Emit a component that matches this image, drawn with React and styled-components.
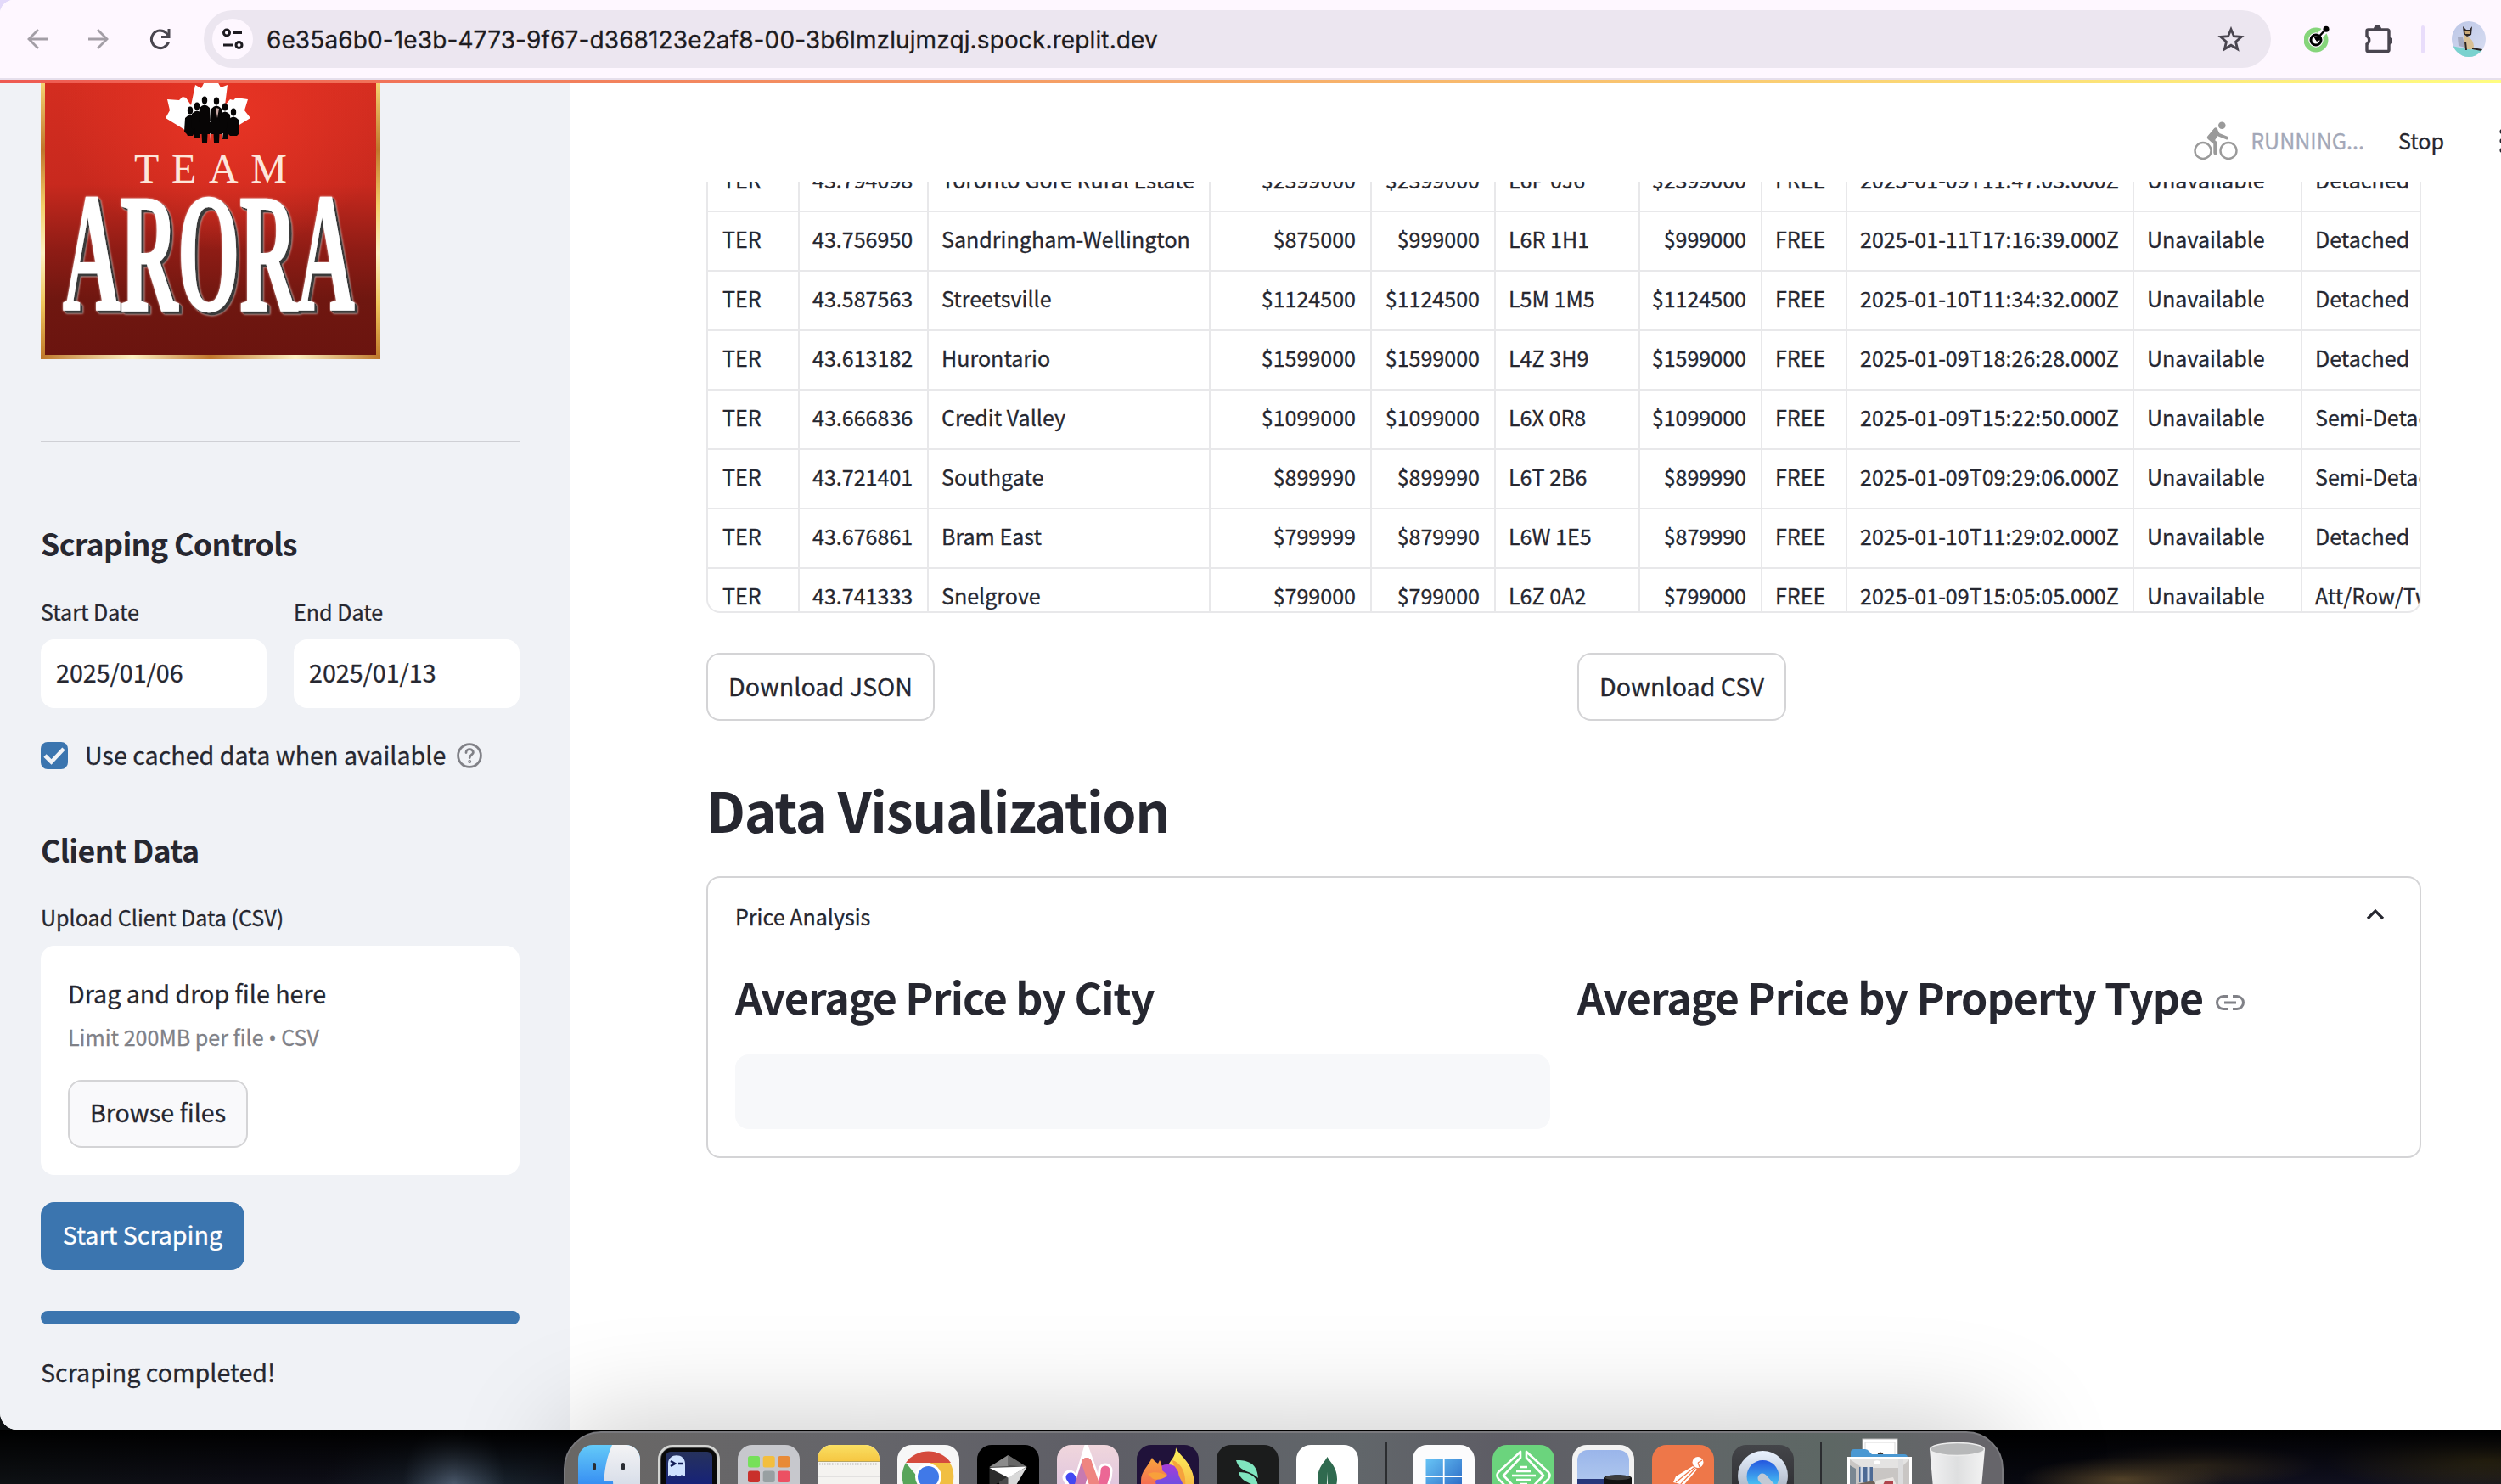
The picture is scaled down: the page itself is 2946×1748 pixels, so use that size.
import React from "react";
import styled, { createGlobalStyle } from "styled-components";

const GlobalStyle = createGlobalStyle`
  * { box-sizing: border-box; }
  html, body { margin: 0; padding: 0; overflow: hidden; background: #000; }
  body {
    font-family: "Noto Sans CJK SC", "Noto Sans", sans-serif;
    color: #262730;
    -webkit-text-stroke: 0.3px currentColor;
  }
`;

const size = { sm: "25.07px", md: "28.65px", lg: "35.8px", xl: "50.1px", xxl: "64.5px" };

const Desktop = styled.div`
  position: relative;
  width: 2946px;
  height: 1748px;
  overflow: hidden;
  background:
    linear-gradient(180deg, #000 0, rgba(0, 0, 0, 0) 64px) 0 1684px / 100% 64px no-repeat,
    radial-gradient(ellipse 60px 80px at 535px 1748px, #4a586b 0, rgba(40, 52, 68, 0) 100%),
    radial-gradient(ellipse 180px 90px at 560px 1748px, #1c2732 0, rgba(20, 26, 34, 0) 100%),
    radial-gradient(ellipse 120px 26px at 2500px 1742px, #5a482c 0, rgba(60, 48, 30, 0) 100%),
    radial-gradient(ellipse 140px 26px at 2590px 1726px, #3d3223 0, rgba(46, 38, 27, 0) 100%),
    radial-gradient(ellipse 190px 40px at 2930px 1720px, #3a3117 0, rgba(42, 35, 16, 0) 100%),
    linear-gradient(90deg, #0e1114 0, #0e0e17 300px, #0e0f18 640px, #090a12 2400px, #10101f 2700px, #10101e 2946px);
`;

const Backdrop = styled.div`
  background: linear-gradient(180deg, #e3d9fa 40px, transparent 40px);
`;

const Window = styled.div`
  width: 2946px;
  height: 1684px;
  display: flex;
  flex-direction: column;
  overflow: hidden;
  border-radius: 16px 0 0 20px;
  background: #fff;
`;

const Toolbar = styled.header`
  height: 94px;
  flex: none;
  display: flex;
  align-items: center;
  padding: 0 18px 0 32px;
  background: #fef7ff;
  border-bottom: 2px solid #e6dfec;
`;

const NavIcons = styled.div`
  display: flex;
  gap: 48px;
  width: 208px;
  svg { display: block; }
`;

const AddressBar = styled.div`
  width: 2436px;
  height: 68px;
  border-radius: 34px;
  background: #ece6f0;
  display: flex;
  align-items: center;
  padding: 0 31px 0 10px;
`;

const SiteInfo = styled.div`
  width: 48px;
  height: 48px;
  border-radius: 50%;
  background: #fef7ff;
  display: flex;
  align-items: center;
  justify-content: center;
`;

const Url = styled.span`
  flex: 1;
  margin-left: 16px;
  padding-top: 1px;
  font-family: Inter, Roboto, sans-serif;
  font-size: 28px;
  line-height: 40px;
  letter-spacing: 0.12px;
  color: #1d1b20;
`;

const Extensions = styled.div`
  display: flex;
  align-items: center;
  gap: 42px;
  margin-left: 39px;
  svg { display: block; }
`;

const Separator = styled.div`
  width: 4px;
  height: 33px;
  border-radius: 2px;
  background: #e9ddfb;
  margin: 0 -10px 0 -8px;
`;

const Page = styled.div`
  position: relative;
  flex: 1;
  min-height: 0;
  display: flex;
`;

const Decoration = styled.div`
  position: absolute;
  top: 0;
  left: 0;
  right: 0;
  height: 4px;
  background: linear-gradient(90deg, #ee5a52, #fffd80);
`;

const Sidebar = styled.aside`
  width: 672px;
  flex: none;
  padding: 0 60px 0 48px;
  background: #f0f2f6;
  display: flex;
  flex-direction: column;
  align-items: stretch;
`;

const LogoSvg = styled.svg`
  display: block;
  width: 400px;
  height: 329px;
`;

const Divider = styled.hr`
  margin: 96px 0 0;
  border: 0;
  height: 2px;
  background: #cfd0d5;
`;

const SideHeading = styled.h2`
  margin: ${(p) => p.$top}px 0 0;
  font-size: ${size.lg};
  line-height: 48px;
  font-weight: 600;
  letter-spacing: -0.0195em;
  -webkit-text-stroke: 0;
  white-space: nowrap;
`;

const DateRow = styled.div`
  display: grid;
  grid-template-columns: 1fr 1fr;
  gap: 32px;
  margin-top: 37px;
`;

const Label = styled.div`
  font-size: ${size.sm};
  line-height: 40px;
  margin-top: ${(p) => p.$top || 0}px;
`;

const DateInput = styled.div`
  margin-top: 13px;
  height: 81px;
  border-radius: 16px;
  background: #fff;
  padding: 0 18px 5px;
  font-size: ${size.md};
  display: flex;
  align-items: center;
`;

const CheckRow = styled.div`
  display: flex;
  align-items: center;
  height: 32px;
  margin-top: 40px;
  font-size: ${size.md};
  span { padding-bottom: 3px; margin: 0 13px 0 20px; white-space: nowrap; }
`;

const CheckBox = styled.div`
  width: 32px;
  height: 32px;
  border-radius: 8px;
  background: #3b75af;
  display: flex;
  align-items: center;
  justify-content: center;
`;

const Uploader = styled.div`
  margin-top: 14px;
  height: 270px;
  border-radius: 16px;
  background: #fff;
  padding: 32px 32px 0;
`;

const UploadTitle = styled.div`
  font-size: ${size.md};
  line-height: 48px;
`;

const UploadHint = styled.div`
  margin-top: 7px;
  font-size: ${size.sm};
  line-height: 40px;
  height: 40px;
  color: #808187;
`;

const Bullet = styled.span`
  font-family: "Noto Sans", sans-serif;
`;

const Button = styled.button`
  display: flex;
  align-items: center;
  justify-content: center;
  height: 80px;
  width: ${(p) => p.$width}px;
  margin: ${(p) => p.$top || 0}px 0 0;
  padding: 0 0 ${(p) => (p.$top ? 6 : 4)}px;
  border-radius: 16px;
  border: 2px solid ${(p) => (p.$primary ? "#3b75af" : "#d4d4d6")};
  background: ${(p) => (p.$primary ? "#3b75af" : p.$tint || "#fff")};
  color: ${(p) => (p.$primary ? "#fff" : "#262730")};
  font-family: inherit;
  font-size: ${size.md};
  -webkit-text-stroke: inherit;
  white-space: nowrap;
`;

const Progress = styled.div`
  margin-top: 48px;
  height: 16px;
  border-radius: 8px;
  background: #3b75af;
`;

const Status = styled.div`
  margin-top: 32px;
  font-size: ${size.md};
  line-height: 48px;
`;

const Main = styled.main`
  flex: 1;
  min-width: 0;
  background: #fff;
  display: flex;
  flex-direction: column;
`;

const StatusBar = styled.div`
  height: 120px;
  flex: none;
  display: flex;
  align-items: center;
  justify-content: flex-end;
  padding-top: 23px;
  font-size: ${size.sm};
  overflow: hidden;
  svg { display: block; flex: none; }
`;

const Running = styled.span`
  margin: 0 40px 2px 15px;
  color: #a3a8b8;
`;

const Stop = styled.span`
  margin: 0 67px 2px 0;
  width: 52px;
`;

const Body = styled.div`
  width: 2020px;
  margin-left: 160px;
`;

const Table = styled.div`
  height: 508px;
  overflow: hidden;
  border: 2px solid #e8e8ea;
  border-top: 0;
  border-radius: 0 0 16px 16px;
`;

const Rows = styled.div`
  margin-top: -34px;
`;

const Row = styled.div`
  display: grid;
  grid-template-columns: 108px 152px 332px 190px 146px 170px 144px 100px 338px 198px 240px;
  height: 70px;
  border-bottom: 2px solid #e8e8ea;
`;

const Cell = styled.div`
  display: flex;
  align-items: center;
  justify-content: ${(p) => (p.$right ? "flex-end" : "flex-start")};
  padding: 0 17px 6px ${(p) => (p.$first ? 17 : 15)}px;
  border-right: 2px solid #e8e8ea;
  font-size: ${size.sm};
  white-space: nowrap;
`;

const Columns = styled.div`
  display: grid;
  grid-template-columns: 1fr 1fr;
  align-items: start;
  gap: 32px;
  margin-top: ${(p) => p.$top}px;
`;

const Title = styled.h1`
  margin: 64px 0 0;
  font-size: ${size.xxl};
  line-height: 80px;
  font-weight: 600;
  letter-spacing: -0.0205em;
  -webkit-text-stroke: 0;
`;

const Expander = styled.section`
  margin-top: 39px;
  height: 332px;
  border: 2px solid #d4d4d6;
  border-radius: 16px;
  padding: 25px 32px 0;
`;

const Summary = styled.div`
  display: flex;
  justify-content: space-between;
  align-items: center;
  height: 40px;
  font-size: ${size.sm};
  line-height: 40px;
  padding-right: 8px;
`;

const ChartTitle = styled.h3`
  display: flex;
  align-items: center;
  margin: 0;
  font-size: ${size.xl};
  line-height: 60px;
  font-weight: 600;
  letter-spacing: -0.0195em;
  -webkit-text-stroke: 0;
  white-space: nowrap;
  svg { margin: 15px 0 0 15px; }
`;

const Skeleton = styled.div`
  margin-top: 39px;
  height: 88px;
  border-radius: 16px;
  background: #f7f8fa;
`;

const Dock = styled.nav`
  position: absolute;
  left: 664px;
  top: 1686px;
  width: 1696px;
  height: 110px;
  border-radius: 44px 44px 0 0;
  border: 2px solid #79797d;
  background: linear-gradient(90deg, #696765, #65656a 20%, #5e5e66 38%, #61666a 55%, #5e5d65 65%, #616668 78%, #5d6764 88%, #66656a 97%);
  box-shadow: 0 0 130px rgba(0, 0, 0, 0.25);
  display: flex;
  align-items: flex-start;
  padding: 14px 0 0 15px;
  gap: 21.05px;
`;

const Tile = styled.svg`
  display: block;
  flex: none;
  width: 73px;
  height: 73px;
  border-radius: 17px;
`;

const Loose = styled.svg`
  display: block;
  flex: none;
  overflow: visible;
  width: ${(p) => p.$w}px;
  height: 73px;
`;

const DockLine = styled.div`
  width: 2px;
  height: 60px;
  flex: none;
  margin: -3px 8.5px 0 10.5px;
  background: #2b2d30;
`;

const Arrow = ({ flip }) => (
  <svg width="24" height="24" viewBox="0 0 24 24" fill="none" stroke="#a39ea6" strokeWidth="2.8" transform={flip ? "scale(-1 1)" : undefined}>
    <path d="M24 12H2M13 1L2 12l11 11" />
  </svg>
);

const Reload = () => (
  <svg width="25" height="25" viewBox="0 0 25 25" fill="none" stroke="#49454f" strokeWidth="3">
    <path d="M22.5 15.5A10.3 10.3 0 1 1 20 5l2 2.5" />
    <path d="M23 0v9.5h-9" />
  </svg>
);

const Tune = () => (
  <svg width="26" height="26" viewBox="0 0 26 26" fill="none" stroke="#1d1b20" strokeWidth="3">
    <circle cx="6" cy="5.5" r="3.5" />
    <path d="M13 5.5h11M2 20h11" />
    <circle cx="20.5" cy="20" r="3.5" />
  </svg>
);

const Star = () => (
  <svg width="32" height="31" viewBox="0 0 32 31" fill="none" stroke="#49454f" strokeWidth="2.8">
    <path d="M16 3.5l3.4 8.2 8.8.7-6.7 5.8 2.1 8.6-7.6-4.6-7.6 4.6 2.1-8.6-6.7-5.8 8.8-.7z" />
  </svg>
);

const GreenTool = () => (
  <svg width="30" height="32" viewBox="0 0 30 32">
    <circle cx="14" cy="17" r="11.5" fill="none" stroke="#86d57b" strokeWidth="6" />
    <path d="M14 17L26 4" stroke="#fef7ff" strokeWidth="8" />
    <circle cx="14" cy="17" r="8.6" fill="#fef7ff" />
    <circle cx="14" cy="17" r="6" fill="#fff" stroke="#000" strokeWidth="3" />
    <path d="M14 17L26 4" stroke="#000" strokeWidth="2.4" />
    <circle cx="26" cy="4.2" r="3.5" />
    <path d="M11 13l7-1 1 5-4 2z" />
  </svg>
);

const Puzzle = () => (
  <svg width="32" height="33" viewBox="0 0 32 33">
    <path d="M3.5 5h23a1.5 1.5 0 0 1 1.5 1.5V29a1.5 1.5 0 0 1-1.5 1.500h-23A1.500 1.500 0 0 1 2 29v-7a5.500 5.500 0 0 0 0-9.500v-6A1.500 1.500 0 0 1 3.500 5z" fill="none" stroke="#49454f" strokeWidth="3.400" />
    <path d="M10 4a4.500 4.500 0 0 1 9 0zM28.500 13.500a4 4 0 0 1 0 9z" fill="#49454f" />
  </svg>
);

const Avatar = () => (
  <svg width="40" height="42" viewBox="0 0 40 42">
    <defs>
      <clipPath id="avatar"><ellipse cx="20" cy="21" rx="20" ry="21" /></clipPath>
      <linearGradient id="avatarSky" x1="0" y1="0" x2="1" y2="1"><stop stopColor="#bcc6e6" /><stop offset="1" stopColor="#d9def2" /></linearGradient>
    </defs>
    <g clipPath="url(#avatar)">
      <rect width="40" height="42" fill="url(#avatarSky)" />
      <path d="M0 29l18 4 22 1v8H0z" fill="#7ad2cf" />
      <path d="M7 19l6 0 3 12-8-2z" fill="#a4a9c0" />
      <path d="M15 14c4 6 12 6 11 19H16c-1-6-3-12-1-19z" fill="#d8bf95" />
      <path d="M13 6l4 4h4l3-4-1 10-5 2-4-3zM24 31l12 2-1 2-11-2zM15 24l2 0 1 10h-2z" fill="#2a2323" />
      <path d="M15 11h7l-1 4h-5z" fill="#c9a877" />
    </g>
  </svg>
);

const people = [
  [176, 36, 66], [184, 31, 69], [193, 24, 74], [207, 25, 74], [217, 32, 70], [227, 38, 66],
];

const Logo = () => (
  <LogoSvg viewBox="0 0 400 329">
    <defs>
      <linearGradient id="red" x1="0" y1="0" x2="0" y2="1">
        <stop offset="0" stopColor="#d42d20" /><stop offset="0.38" stopColor="#c8291e" />
        <stop offset="0.62" stopColor="#8e1c15" /><stop offset="0.8" stopColor="#6f1710" /><stop offset="1" stopColor="#6b140f" />
      </linearGradient>
      <radialGradient id="glow" cx="0.55" cy="0.12" r="0.5">
        <stop offset="0" stopColor="#e83424" /><stop offset="1" stopColor="#e83424" stopOpacity="0" />
      </radialGradient>
      <linearGradient id="goldV" x1="0" y1="0" x2="0" y2="1">
        <stop offset="0" stopColor="#f7d774" /><stop offset="0.25" stopColor="#c0762c" /><stop offset="0.45" stopColor="#f3cf69" />
        <stop offset="0.62" stopColor="#fdf2c4" /><stop offset="0.8" stopColor="#f0c75c" /><stop offset="1" stopColor="#bf772a" />
      </linearGradient>
      <linearGradient id="goldH">
        <stop offset="0" stopColor="#bf772a" /><stop offset="0.27" stopColor="#fdf2c4" /><stop offset="0.5" stopColor="#c0762c" />
        <stop offset="0.75" stopColor="#fdf2c4" /><stop offset="1" stopColor="#bf772a" />
      </linearGradient>
      <filter id="extrude" x="-5%" y="-5%" width="112%" height="112%">
        <feDropShadow dx="1.5" dy="1.5" stdDeviation="0" floodColor="#3b3b3b" />
        <feDropShadow dx="2" dy="2" stdDeviation="0" floodColor="#3b3b3b" />
        <feDropShadow dx="0" dy="0" stdDeviation="0.8" floodColor="#e6c4c0" />
      </filter>
    </defs>
    <rect width="400" height="329" fill="url(#goldV)" />
    <rect y="324" width="400" height="5" fill="url(#goldH)" />
    <rect x="5" width="390" height="324" fill="url(#red)" />
    <rect x="5" width="390" height="324" fill="url(#glow)" />
    <path fill="#fff" d="M182 6l7 4 5-10h13l5 9 8-3-3 24 6-7 4 1 3-3 14 2-4 13 7 9-18 11-12 8h-40l-12-8-18-11 5-9-3-13 14 1 4-4 4 1 6 9z" />
    <g fill="#070505">
      {people.map(([x, y, bottom]) => (
        <g key={x}>
          <ellipse cx={x} cy={y} rx="3.2" ry="4.6" />
          <path d={`M${x - 6} ${y + 9}q6-7 12 0l1 16-3 3-1 ${bottom - y - 28}h-6l-1-${bottom - y - 28}-3-3z`} />
        </g>
      ))}
      <path d="M180 50h40l-2 14h-36z" />
    </g>
    <path d="M206 33l2 12 2-11zM199 63l1 9 1-9zM213 63l1 7 1-7z" fill="#c9a9a5" />
    <text x="110" y="121" fontFamily="Liberation Serif, serif" fontSize="48" textLength="180" lengthAdjust="spacing" fill="#fde6da">TEAM</text>
    <g filter="url(#extrude)">
      <text transform="translate(26 271) scale(0.471 1)" fontFamily="Liberation Serif, serif" fontWeight="700" fontSize="199" fill="#fff" stroke="#fff" strokeWidth="2.5">ARORA</text>
    </g>
  </LogoSvg>
);

const Help = () => (
  <svg width="30" height="30" viewBox="0 0 30 30" fill="none" stroke="#808187" strokeWidth="2.8" strokeLinecap="round">
    <circle cx="15" cy="15" r="13.4" />
    <path d="M11 11.5c0-5 8.4-5 8.4-.3 0 3-4.2 3.100-4.200 6.300" />
    <circle cx="15.200" cy="22" r=".6" />
  </svg>
);

const Cyclist = () => (
  <svg width="52" height="46" viewBox="0 0 52 46" fill="none" stroke="#9a9a9a">
    <circle cx="11" cy="34.5" r="9.5" strokeWidth="2.4" />
    <circle cx="41" cy="34.5" r="9.5" strokeWidth="2.4" />
    <circle cx="33.3" cy="4.8" r="4.3" fill="#9a9a9a" stroke="none" />
    <path d="M26 9.5l-8 9.5 7.500 6.500V37" strokeWidth="4.400" strokeLinecap="round" strokeLinejoin="round" />
    <path d="M26 10l3 5.500 10 4" strokeWidth="4" strokeLinecap="round" strokeLinejoin="round" />
    <path d="M17 19l8-10 4 5-5 8z" fill="#9a9a9a" strokeWidth="2" strokeLinejoin="round" />
  </svg>
);

const Kebab = () => (
  <svg width="2" height="28" viewBox="0 0 2 28" fill="#262730">
    <circle cx="3.4" cy="3" r="3" /><circle cx="3.4" cy="14" r="3" /><circle cx="3.4" cy="25" r="3" />
  </svg>
);

const rows = [
  ["TER", "43.794098", "Toronto Gore Rural Estate", "$2399000", "$2399000", "L6P 0J6", "$2399000", "FREE", "2025-01-09T11:47:03.000Z", "Unavailable", "Detached"],
  ["TER", "43.756950", "Sandringham-Wellington", "$875000", "$999000", "L6R 1H1", "$999000", "FREE", "2025-01-11T17:16:39.000Z", "Unavailable", "Detached"],
  ["TER", "43.587563", "Streetsville", "$1124500", "$1124500", "L5M 1M5", "$1124500", "FREE", "2025-01-10T11:34:32.000Z", "Unavailable", "Detached"],
  ["TER", "43.613182", "Hurontario", "$1599000", "$1599000", "L4Z 3H9", "$1599000", "FREE", "2025-01-09T18:26:28.000Z", "Unavailable", "Detached"],
  ["TER", "43.666836", "Credit Valley", "$1099000", "$1099000", "L6X 0R8", "$1099000", "FREE", "2025-01-09T15:22:50.000Z", "Unavailable", "Semi-Detached"],
  ["TER", "43.721401", "Southgate", "$899990", "$899990", "L6T 2B6", "$899990", "FREE", "2025-01-09T09:29:06.000Z", "Unavailable", "Semi-Detached"],
  ["TER", "43.676861", "Bram East", "$799999", "$879990", "L6W 1E5", "$879990", "FREE", "2025-01-10T11:29:02.000Z", "Unavailable", "Detached"],
  ["TER", "43.741333", "Snelgrove", "$799000", "$799000", "L6Z 0A2", "$799000", "FREE", "2025-01-09T15:05:05.000Z", "Unavailable", "Att/Row/Twnhouse"],
];

const Gradient = ({ id, from, to, diagonal }) => (
  <linearGradient id={id} x1="0" y1="0" x2={diagonal ? 1 : 0} y2="1"><stop stopColor={from} /><stop offset="1" stopColor={to} /></linearGradient>
);

const DockApps = () => (
  <>
    <Tile viewBox="0 0 73 73">
      <defs><Gradient id="finder" from="#64caf8" to="#1d6df0" /><Gradient id="finderR" from="#f3f3f5" to="#c9d2e2" /></defs>
      <rect width="73" height="73" fill="url(#finder)" />
      <path d="M40 0c-6 14-9 28-9.500 43H41l2 30h30V0z" fill="url(#finderR)" />
      <path d="M19 23v5M53 23v5" stroke="#2a2d33" strokeWidth="4" strokeLinecap="round" />
    </Tile>
    <Tile viewBox="0 0 73 73">
      <defs><Gradient id="term" from="#26325c" to="#0a1590" /></defs>
      <rect width="73" height="73" fill="#d3d4d2" />
      <rect x="3" y="3" width="67" height="80" rx="14" fill="#444" />
      <rect x="4" y="4" width="65" height="80" rx="12" fill="#090909" />
      <rect x="9" y="8" width="55" height="70" rx="6" fill="url(#term)" />
      <path d="M12 37V22c0-13 20-13 20 0v15l-2 0-2-2-2 2h-3l-2-2-2 2h-3l-2-2z" fill="#cfe2ff" />
      <path d="M15 19l5 3-5 3M24 22h6" stroke="#111c55" strokeWidth="2.6" fill="none" />
    </Tile>
    <Tile viewBox="0 0 73 73">
      <rect width="73" height="73" fill="#c7c8cd" />
      {["#76e05a", "#f3be3e", "#e88a37", "#c9302b", "#98a0a2", "#ec5063"].map((c, i) => (
        <rect key={c} x={12 + (i % 3) * 17.7} y={13 + Math.floor(i / 3) * 17.5} width="14" height="13.5" rx="2.5" fill={c} />
      ))}
    </Tile>
    <Tile viewBox="0 0 73 73">
      <defs><Gradient id="notes" from="#f9df63" to="#f6c742" /></defs>
      <rect width="73" height="73" fill="#f4f3f0" />
      <rect width="73" height="19" fill="url(#notes)" />
      <path d="M0 19.5h73" stroke="#b7a45e" />
      <path d="M2 22.5h69" stroke="#b7b7b4" strokeWidth="2" strokeDasharray="1.5 1.5" />
      <path d="M0 37h73" stroke="#dcdbdb" strokeWidth="1.6" />
    </Tile>
    <Tile viewBox="0 0 73 73">
      <rect width="73" height="73" fill="#f7f7f7" />
      <path d="M10 21a32 31 0 0 1 53 0H36z" fill="#d54b3d" />
      <path d="M62 21A32 32 0 0 1 37 69L48 36 39 21z" fill="#f1bf42" />
      <path d="M10 21A32 32 0 0 0 37 69l2-18-14-12z" fill="#57a55a" />
      <circle cx="36.5" cy="37.500" r="15.500" fill="#fff" /><circle cx="36.500" cy="37.500" r="12.500" fill="#4079e8" />
    </Tile>
    <Tile viewBox="0 0 73 73">
      <rect width="73" height="73" fill="#000" />
      <path d="M36.5 12l22 14-22 37-22-37z" fill="#4c4c4c" />
      <path d="M36.5 12v13l-22 1z" fill="#8b8b8b" /><path d="M36.5 12l22 14-22-2z" fill="#686868" />
      <path d="M14.5 26v25l22-14z" fill="#2c2c2c" /><path d="M58.5 26l-22 37V38z" fill="#d9d9d9" />
      <path d="M14.5 27l44-1.5-22 13z" fill="#fff" />
    </Tile>
    <Tile viewBox="0 0 73 73">
      <defs><Gradient id="arc" from="#f0d6dc" to="#d9bfe0" /></defs>
      <rect width="73" height="73" fill="url(#arc)" />
      <g strokeLinecap="round" fill="none">
        <path d="M15 38l17 26M57 30c0 14-8 24-16 34M23 60l12-39 15 42" stroke="#fff" strokeWidth="17" />
        <path d="M16 38l17 26" stroke="#4348f2" strokeWidth="11" />
        <path d="M57 30c0 14-8 24-16 34" stroke="#ec6795" strokeWidth="11" />
        <path d="M35 21L23 60" stroke="#c77ab1" strokeWidth="12" /><path d="M35 21l15 42" stroke="#ef8580" strokeWidth="12" />
      </g>
    </Tile>
    <Tile viewBox="0 0 73 73">
      <defs><Gradient id="fox" from="#f8a63b" to="#f2396b" /><Gradient id="flame" from="#fdf35c" to="#f59a3c" /><Gradient id="globe" from="#a63bd8" to="#4b5be8" /></defs>
      <rect width="73" height="73" fill="#20123a" />
      <path d="M46 3c2 8 22 18 22 44v30H38V22c4-6 8-10 8-19z" fill="url(#flame)" />
      <circle cx="36.5" cy="42" r="19" fill="url(#globe)" />
      <path d="M18 15c2 4 5 5 7 7l2-4c2 3 3 8 3 12l6 5c-4 5-12 3-14 8 1 8 6 12 12 14l-6 20H5V42c0-11 8-16 13-27z" fill="url(#fox)" />
      <path d="M13 34c7-3 15-2 23 2-5 5-15 6-18 3z" fill="#f8a03b" />
      <path d="M42 18c10 3 17 14 15 34-3-9-8-14-8-20-2-5-7-8-7-14z" fill="#f6a33d" />
    </Tile>
    <Tile viewBox="0 0 73 73">
      <rect width="73" height="73" fill="#1b1c1c" />
      <g fill="#80e5bf">
        <path d="M23 18c12 0 25 2 26 21-8-9-22-6-26-21z" />
        <path d="M26 32c12 0 23 4 23 19-7-7-20-6-23-19z" />
        <path d="M29 46c9-1 20 4 20 16-7-4-16-5-20-16z" />
      </g>
    </Tile>
    <Tile viewBox="0 0 73 73">
      <rect width="73" height="73" fill="#fff" />
      <path d="M36.5 14c3 6 11.500 12 11.500 26 0 12-7 18-11.500 24C32 58 25 52 25 40c0-14 8.500-20 11.500-26z" fill="#2f6a4f" />
      <path d="M36.500 32l1.500 37h-3z" fill="#e5eee8" />
    </Tile>
    <DockLine />
    <Tile viewBox="0 0 73 73">
      <defs><Gradient id="win" from="#68c5f6" to="#2560c0" diagonal /></defs>
      <rect width="73" height="73" fill="#fcfcfd" />
      <rect x="15.5" y="16" width="42.5" height="42.5" rx="1" fill="url(#win)" />
      <path d="M36.7 15v45M14 37h45" stroke="#fff" strokeWidth="1.8" />
    </Tile>
    <Tile viewBox="0 0 73 73">
      <rect width="73" height="73" fill="#6bd47d" />
      <g fill="none" stroke="#fff" strokeWidth="2.6" strokeLinejoin="round">
        <path d="M33 8v7L13 36l20 21v9L7 40q-3-4 0-8z" /><path d="M40 8v7l20 21-20 21v9l26-26q3-4 0-8z" />
        <path d="M33 26h8M28 31h17M23 36h28M28 41h17M33 46h8" />
      </g>
    </Tile>
    <Tile viewBox="0 0 73 73">
      <defs><Gradient id="sky" from="#9ab5ea" to="#bcd3f1" /></defs>
      <rect width="73" height="73" fill="#f2f2f2" />
      <rect x="6" y="6" width="61" height="61" rx="12" fill="url(#sky)" />
      <rect x="6" y="40" width="61" height="27" fill="#27387c" />
      <path d="M37 39c0-5 33-5 33 0v34H37z" fill="#111" /><ellipse cx="53.5" cy="38.5" rx="15" ry="2.8" fill="#3c3c3c" />
    </Tile>
    <Tile viewBox="0 0 73 73">
      <rect width="73" height="73" fill="#ee7749" />
      <circle cx="54" cy="20.5" r="6.5" fill="#fff" />
      <path d="M54 21l5-3M54 21l2 5" stroke="#ee7749" strokeWidth="1.2" />
      <path d="M48 25l5 4-18 21-16 13 14-17-8-2 3-7z" fill="#fff" />
      <path d="M49 27L28 44M51 28L32 48" stroke="#ee7749" strokeWidth="1.2" />
    </Tile>
    <Tile viewBox="0 0 73 73">
      <defs><Gradient id="qt" from="#444549" to="#27282c" /><Gradient id="qtIn" from="#2456df" to="#53e3fa" /><Gradient id="qtRing" from="#e9f2ff" to="#9aa4b4" /></defs>
      <rect width="73" height="73" fill="url(#qt)" />
      <circle cx="36.5" cy="36.5" r="29.5" fill="url(#qtRing)" /><circle cx="36.5" cy="37" r="19" fill="url(#qtIn)" />
      <path d="M36 39l20 22" stroke="#c2c9d4" strokeWidth="11" strokeLinecap="round" />
    </Tile>
    <DockLine />
    <Loose $w={76} viewBox="0 0 76 73">
      <rect x="18" y="-7" width="41" height="30" fill="#fff" stroke="#b9b9b9" />
      <rect x="21" y="-3" width="35" height="22" fill="none" stroke="#dadada" />
      <path d="M36 10q3-3 6 0l1 4h-8z" fill="#3d3630" />
      <path d="M4 9q0-4 4-4h13q3 0 5 3l3 3h38q4 0 4 4v8H4z" fill="#4a98d2" />
      <rect y="14" width="76" height="59" fill="#fff" />
      <rect x="3" y="17" width="70" height="56" fill="#c9c6c4" />
      <path d="M3 17h70l-10 10H18z" fill="#e4e3e2" /><path d="M60 17h6v40h-6z" fill="#dcdcdd" />
      <rect x="14" y="26" width="16" height="18" fill="#4d6a95" /><path d="M17 26v18M25 26v18" stroke="#cfd8e6" strokeWidth="3" />
      <path d="M3 24l7 4v20H3z" fill="#7a8792" /><path d="M12 46l18-4 6 6H10z" fill="#6e6259" />
      <path d="M34 42l20-4 4 10H32z" fill="#e9e5e2" /><path d="M44 43l10-1v5H42z" fill="#b0444b" />
      <ellipse cx="35" cy="20.5" rx="3.5" ry="2.2" fill="#fff" />
    </Loose>
    <Loose $w={65} viewBox="0 0 65 73">
      <defs><linearGradient id="bin"><stop stopColor="#f1f1f2" /><stop offset="0.5" stopColor="#dedfe0" /><stop offset="1" stopColor="#f3f3f3" /></linearGradient></defs>
      <path d="M0 5l6 68h53l6-68z" fill="url(#bin)" />
      <ellipse cx="32.5" cy="5" rx="32" ry="7.5" fill="#b7b8b9" stroke="#ececec" strokeWidth="1.4" />
    </Loose>
  </>
);

export default function App() {
  return (
    <Desktop>
      <GlobalStyle />
      <Backdrop>
        <Window>
          <Toolbar>
            <NavIcons><Arrow /><Arrow flip /><Reload /></NavIcons>
            <AddressBar>
              <SiteInfo><Tune /></SiteInfo>
              <Url>6e35a6b0-1e3b-4773-9f67-d368123e2af8-00-3b6lmzlujmzqj.spock.replit.dev</Url>
              <Star />
            </AddressBar>
            <Extensions>
              <GreenTool />
              <Puzzle />
              <Separator />
              <Avatar />
            </Extensions>
          </Toolbar>
          <Page>
            <Sidebar>
              <Logo />
              <Divider />
              <SideHeading $top={94}>Scraping Controls</SideHeading>
              <DateRow>
                <div><Label>Start Date</Label><DateInput>2025/01/06</DateInput></div>
                <div><Label>End Date</Label><DateInput>2025/01/13</DateInput></div>
              </DateRow>
              <CheckRow>
                <CheckBox>
                  <svg width="26" height="22" viewBox="0 0 26 22" fill="none" stroke="#f0f2f6" strokeWidth="4.6"><path d="M2 11l7.5 7.5L24 3" /></svg>
                </CheckBox>
                <span>Use cached data when available</span>
                <Help />
              </CheckRow>
              <SideHeading $top={70}>Client Data</SideHeading>
              <Label $top={36}>Upload Client Data (CSV)</Label>
              <Uploader>
                <UploadTitle>Drag and drop file here</UploadTitle>
                <UploadHint>Limit 200MB per file <Bullet>•</Bullet> CSV</UploadHint>
                <Button $width={212} $top={31} $tint="#f9f9fb">Browse files</Button>
              </Uploader>
              <Button $primary $width={240} $top={32}>Start Scraping</Button>
              <Progress />
              <Status>Scraping completed!</Status>
            </Sidebar>
            <Main>
              <StatusBar>
                <Cyclist />
                <Running>RUNNING...</Running>
                <Stop>Stop</Stop>
                <Kebab />
              </StatusBar>
              <Body>
                <Table>
                  <Rows>
                    {rows.map((r) => (
                      <Row key={r[1]}>
                        {r.map((v, i) => (
                          <Cell key={i} $first={i === 0} $right={i === 3 || i === 4 || i === 6}>{v}</Cell>
                        ))}
                      </Row>
                    ))}
                  </Rows>
                </Table>
                <Columns $top={47}>
                  <Button $width={269}>Download JSON</Button>
                  <Button $width={246}>Download CSV</Button>
                </Columns>
                <Title>Data Visualization</Title>
                <Expander>
                  <Summary>
                    Price Analysis
                    <svg width="24" height="16" viewBox="0 0 24 16" fill="none" stroke="#262730" strokeWidth="3.2"><path d="M3 11l9-9 9 9" /></svg>
                  </Summary>
                  <Columns $top={44}>
                    <div>
                      <ChartTitle>Average Price by City</ChartTitle>
                      <Skeleton />
                    </div>
                    <ChartTitle>
                      Average Price by Property Type
                      <svg width="34" height="18" viewBox="0 0 34 18" fill="none" stroke="#808187" strokeWidth="3"><path d="M14 1.5H9a7.5 7.5 0 0 0 0 15h5M20 1.5h5a7.5 7.5 0 0 1 0 15h-5M10 9h14" /></svg>
                    </ChartTitle>
                  </Columns>
                </Expander>
              </Body>
            </Main>
            <Decoration />
          </Page>
        </Window>
      </Backdrop>
      <Dock><DockApps /></Dock>
    </Desktop>
  );
}
